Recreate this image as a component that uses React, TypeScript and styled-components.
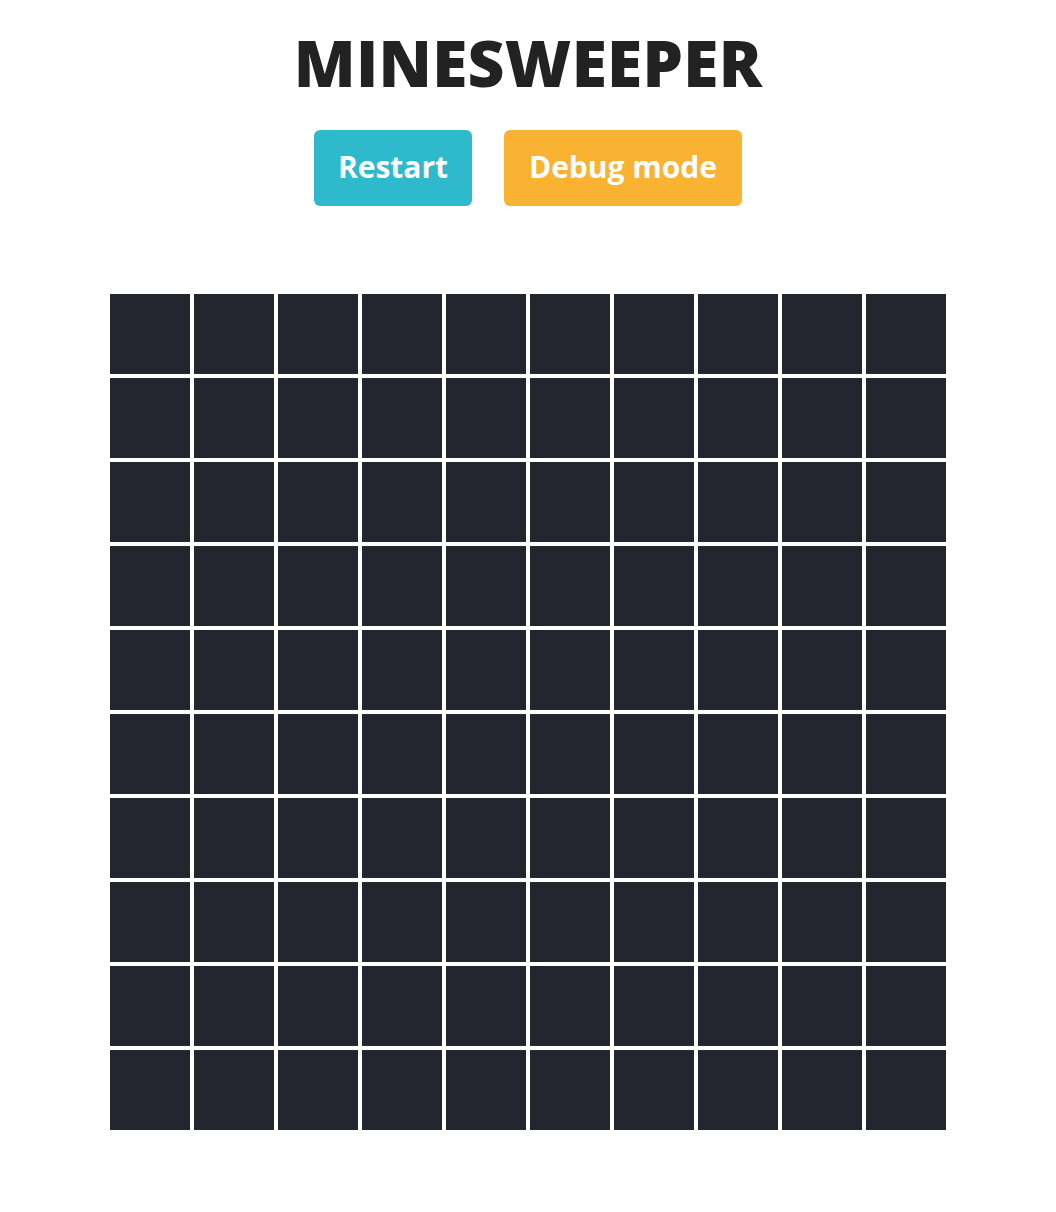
import React from "react";
import styled, { createGlobalStyle } from "styled-components";

const Global = createGlobalStyle`
  html, body { margin: 0; padding: 0; background: #ffffff; }
  body { font-family: "Open Sans", "DejaVu Sans", sans-serif; }
`;

const Page = styled.main`
  display: flex;
  flex-direction: column;
  align-items: center;
  padding-top: 31px;
`;

const Title = styled.h1`
  margin: 0;
  font-size: 64px;
  line-height: 64px;
  font-weight: 800;
  color: #222222;
  letter-spacing: 0.3px;
`;

const Toolbar = styled.div`
  display: flex;
  gap: 32px;
  margin-top: 35px;
`;

const Button = styled.button<{ $tone: "teal" | "orange"; $w: number }>`
  width: ${(p) => p.$w}px;
  height: 76px;
  border: none;
  border-radius: 6px;
  background: ${(p) => (p.$tone === "teal" ? "#2eb9cc" : "#fab232")};
  color: #ffffff;
  font-family: "Open Sans", "DejaVu Sans", sans-serif;
  font-size: 30px;
  font-weight: 700;
  cursor: pointer;
  padding: 0 0 4px 0;
`;

const Board = styled.div`
  margin-top: 88px;
  display: grid;
  grid-template-columns: repeat(10, 80px);
  grid-auto-rows: 80px;
  gap: 4px;
`;

const Cell = styled.div`
  background: #23262e;
`;

export default function App() {
  const cells = Array.from({ length: 100 }, (_, i) => i);
  return (
    <>
      <Global />
      <Page>
        <Title>MINESWEEPER</Title>
        <Toolbar>
          <Button $tone="teal" $w={158}>Restart</Button>
          <Button $tone="orange" $w={238}>Debug mode</Button>
        </Toolbar>
        <Board>
          {cells.map((i) => (
            <Cell key={i} />
          ))}
        </Board>
      </Page>
    </>
  );
}
